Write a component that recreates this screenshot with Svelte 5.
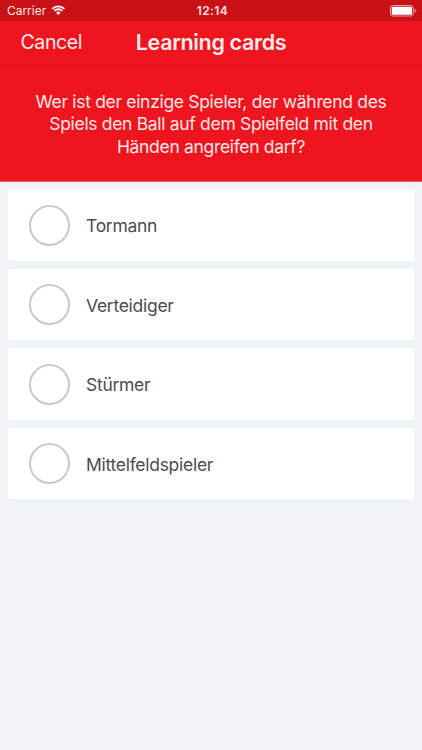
<script>
  const lines = [
    'Wer ist der einzige Spieler, der während des',
    'Spiels den Ball auf dem Spielfeld mit den',
    'Händen angreifen darf?'
  ];
  const answers = ['Tormann', 'Verteidiger', 'Stürmer', 'Mittelfeldspieler'];
  let selected = $state(-1);
</script>

<main class="screen">
  <div class="status">
    <div class="carrier">
      <span>Carrier</span>
      <svg class="wifi" width="14.5" height="10.5" viewBox="0 0 16 11" aria-hidden="true">
        <path d="M1.3 3.9a9.5 9.5 0 0 1 13.4 0" />
        <path d="M3.7 6.2a6.1 6.1 0 0 1 8.6 0" />
        <path class="dot" d="M5.5 8.1a3.5 3.5 0 0 1 5 0L8 10.7z" />
      </svg>
    </div>
    <span class="time">12:14</span>
    <svg class="battery" width="28" height="12" viewBox="0 0 28 12" aria-hidden="true">
      <rect class="case" x="1.5" y="0.5" width="22.8" height="10.5" rx="2.3" />
      <rect class="charge" x="2.8" y="1.8" width="20.2" height="7.9" rx="0.8" />
      <path class="cap" d="M25.4 3.8a2 2 0 0 1 0 4z" />
    </svg>
  </div>
  <header class="nav">
    <button class="cancel">Cancel</button>
    <h1>Learning cards</h1>
    <span></span>
  </header>
  <section class="question">
    {#each lines as line}<p>{line}</p>{/each}
  </section>
  <div class="answers">
    {#each answers as answer, i}
      <button class="card" class:selected={selected === i} onclick={() => (selected = i)}>
        <span class="ring"></span>
        <span class="label">{answer}</span>
      </button>
    {/each}
  </div>
</main>

<style>
  :global(body) { margin: 0; }
  .screen {
    box-sizing: border-box;
    height: 750px;
    overflow: hidden;
    background: #f0f4f7;
    font-family: Inter, "Liberation Sans", sans-serif;
  }
  button { border: 0; padding: 0; font: inherit; text-align: left; }
  .status {
    height: 21px;
    box-sizing: border-box;
    padding: 0 5px 0 7px;
    display: grid;
    grid-template-columns: 1fr auto 1fr;
    align-items: center;
    background: #c91118;
    color: #fde4e5;
    font-size: 12px;
    line-height: 21px;
  }
  .carrier { display: flex; align-items: center; gap: 5px; }
  .carrier span { letter-spacing: -0.03px; }
  .wifi path { fill: none; stroke: #fff; stroke-width: 2; }
  .wifi .dot { fill: #fff; stroke: none; }
  .time { font-weight: 600; padding-left: 1px; letter-spacing: 0.4px; }
  .battery { justify-self: end; }
  .case { fill: none; stroke: #ed9b9e; }
  .charge { fill: #fff; }
  .cap { fill: #e0777b; }
  .nav {
    height: 45px;
    box-sizing: border-box;
    padding: 0 20.5px 3px;
    display: grid;
    grid-template-columns: 1fr auto 1fr;
    align-items: center;
    background: #ee151f;
    border-bottom: 1px solid #d6121b;
    color: #ffebec;
  }
  .cancel {
    padding-top: 1px;
    background: none;
    color: inherit;
    font-size: 19.5px;
    letter-spacing: -0.4px;
  }
  h1 { margin: 0; font-size: 21.5px; font-weight: 600; line-height: 24px; letter-spacing: -0.35px; }
  .question {
    height: 116px;
    box-sizing: border-box;
    padding-top: 25px;
    background: #ee151f;
    border-bottom: 1px solid #ec5a62;
    color: #ffe6e7;
    font-size: 17.5px;
    letter-spacing: -0.32px;
    line-height: 22.4px;
    text-align: center;
  }
  p { margin: 0; white-space: nowrap; }
  .answers { display: flex; flex-direction: column; gap: 8px; padding: 7.8px 8.3px; }
  .card {
    height: 71.35px;
    padding-left: 20.8px;
    display: flex;
    align-items: center;
    gap: 15.9px;
    background: #fff;
    border-radius: 2px;
    color: #4c4c51;
    font-size: 17.5px;
    letter-spacing: -0.28px;
  }
  .label { padding-top: 1px; }
  .ring {
    width: 41px;
    height: 41px;
    box-sizing: border-box;
    border: 2px solid #c9c9c9;
    border-radius: 50%;
  }
  .selected .ring { border-color: #ee151f; }
</style>
